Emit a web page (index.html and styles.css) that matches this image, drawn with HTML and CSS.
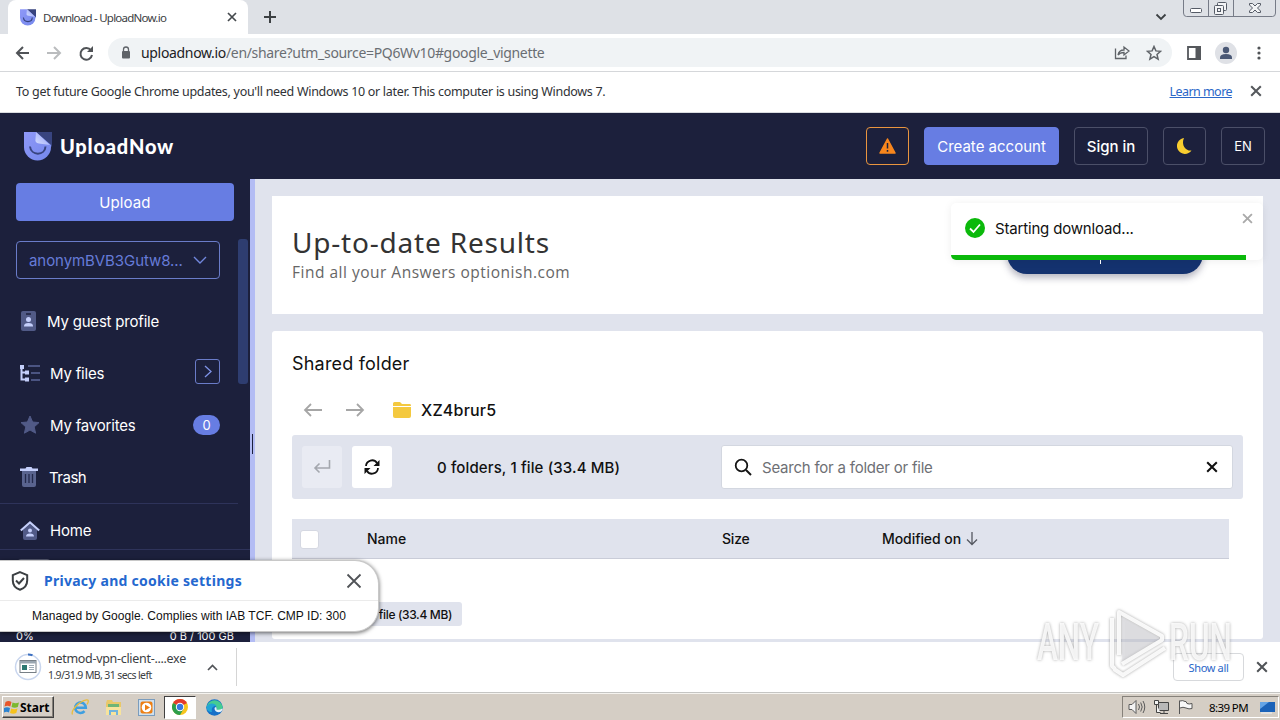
FILE: index.html
```html
<!DOCTYPE html>
<html lang="en">
<head>
<meta charset="utf-8">
<title>Download - UploadNow.io</title>
<link rel="stylesheet" href="styles.css">
</head>
<body>
<svg width="0" height="0" class="defs">
  <defs>
    <linearGradient id="lg" x1="0" y1="0" x2="1" y2="1"><stop offset="0" stop-color="#8f98f8"/><stop offset="1" stop-color="#7488ec"/></linearGradient>
    <linearGradient id="fold" x1="0" y1="1" x2="1" y2="0"><stop offset="0" stop-color="#d5ddff"/><stop offset="1" stop-color="#8f9df4"/></linearGradient>
    <symbol id="logo" viewBox="0 0 28 29">
      <path d="M12 0h16v15z" fill="#38447f"/>
      <path d="M0 0h12l15 13v2a13.500 13.500 0 0 1-27 0z" fill="url(#lg)"/>
      <path d="M12 0l14 13-11-1.500c-3-.5-4-2-3.500-4.500z" fill="url(#fold)"/>
      <path d="M6 14.500c1 9.500 15 9.500 15.500 0" fill="none" stroke="#38447f" stroke-width="2"/>
    </symbol>
    <symbol id="x" viewBox="0 0 10 10"><path d="M1 1l8 8M9 1L1 9" fill="none" stroke="currentColor" stroke-width="1.700"/></symbol>
  </defs>
</svg>
<div class="screen">
  <div class="tabstrip">
    <div class="tab">
      <svg class="fav" width="16" height="17"><use href="#logo"/></svg>
      <span class="tab-title">Download - UploadNow.io</span>
      <svg class="tab-x" width="10" height="10"><use href="#x"/></svg>
    </div>
    <svg class="plus" width="12" height="12" viewBox="0 0 12 12"><path d="M6 0v12M0 6h12" stroke="#3c4043" stroke-width="2"/></svg>
    <svg class="tabsearch" width="12" height="8" viewBox="0 0 12 8"><path d="M1.500 1.500L6 6l4.500-4.500" fill="none" stroke="#3c4043" stroke-width="1.800"/></svg>
    <svg class="winbtns" width="94" height="18" viewBox="0 0 94 18" fill="none" stroke="#767b87">
      <path d="M.5 0v13q0 3.500 3 3.500h86q3 0 3-3.500V0M25.500 0v16M50.500 0v16"/>
      <rect x="7.500" y="8.500" width="11" height="4" rx="1" fill="#fff" stroke="#555b66"/>
      <g stroke="#555b66" fill="#f3f4f6"><rect x="34.500" y="2.500" width="9" height="8" rx="1"/><rect x="31.500" y="5.500" width="9" height="9" rx="1"/><rect x="34.500" y="8.500" width="3" height="3"/>
      <path d="M66.500 3.500h3l2.500 2.500 2.500-2.500h3v1.500L74.500 8l3 3v1.500h-3L72 10l-2.500 2.500h-3V11l3-3-3-3z"/></g>
    </svg>
  </div>
  <div class="toolbar">
    <svg class="nav" width="80" height="18" viewBox="0 0 80 18" fill="none" stroke-width="2">
      <g stroke="#505357"><path d="M14 9H2M8 3L2 9l6 6"/></g>
      <g stroke="#babcbe"><path d="M32 9h13M39 3l6 6-6 6"/></g>
      <path d="M76 6.500A5.800 5.800 0 1 0 77 11" stroke="#505357"/><path d="M78 2v6h-6z" fill="#505357"/>
    </svg>
    <div class="omni">
      <svg width="10" height="13" viewBox="0 0 10 13"><rect x="1" y="5" width="8" height="7.500" rx="1" fill="#5f6368"/><path d="M2.500 5.500V3.500a2.500 2.500 0 0 1 5 0v2" fill="none" stroke="#5f6368" stroke-width="1.300"/></svg>
      <span class="url"><b>uploadnow.io</b>/en/share?utm_source=PQ6Wv10#google_vignette</span>
      <svg class="share" width="16" height="15" viewBox="0 0 16 15" fill="none" stroke="#5f6368" stroke-width="1.300"><path d="M1.500 3.500V13.500H12V10.500"/><path d="M4 10q1-5 6-5V2l5 4-5 4V7.500q-4 0-6 2.500z"/></svg>
      <svg class="star" width="16" height="16" viewBox="0 0 16 16"><path d="M8 1.500l1.900 4.400 4.700.4-3.600 3.200 1.100 4.700L8 11.700l-4.100 2.500L5 9.500 1.400 6.300l4.700-.4z" fill="none" stroke="#5f6368" stroke-width="1.500"/></svg>
    </div>
    <svg class="panel" width="14" height="14" viewBox="0 0 14 14"><path d="M1 1h12v12H1z" fill="none" stroke="#55585c" stroke-width="1.800"/><path d="M8.500 0H14v14H8.500z" fill="#55585c"/></svg>
    <svg class="avatar" width="22" height="22" viewBox="0 0 22 22"><circle cx="11" cy="11" r="11" fill="#dfe1e6"/><circle cx="11" cy="8" r="3.200" fill="#4a5875"/><path d="M5 17v-1.500q0-3.500 6-3.500t6 3.500V17z" fill="#4a5875"/></svg>
    <svg class="dots" width="4" height="14" viewBox="0 0 4 14" fill="#505357"><circle cx="2" cy="2" r="1.600"/><circle cx="2" cy="7" r="1.600"/><circle cx="2" cy="12" r="1.600"/></svg>
  </div>
  <div class="infobar">
    <span class="info-text">To get future Google Chrome updates, you'll need Windows 10 or later. This computer is using Windows 7.</span>
    <span class="learn">Learn more</span>
    <svg width="12" height="12"><use href="#x"/></svg>
  </div>
  <header class="site">
    <svg width="28" height="29"><use href="#logo"/></svg>
    <span class="brand">UploadNow</span>
    <div class="hbtns">
      <div class="hb warn"><svg width="17" height="16" viewBox="0 0 17 16"><path d="M8.500 1L16 15H1z" fill="#f8861d" stroke="#f8861d" stroke-linejoin="round" stroke-width="1.500"/><path d="M8.500 5v5.500M8.500 12v1.700" stroke="#1c203c" stroke-width="1.500"/></svg></div>
      <div class="hb create"><span>Create account</span></div>
      <div class="hb sign"><span>Sign in</span></div>
      <div class="hb moon"><svg width="15" height="16" viewBox="0 0 15 16"><path d="M7 0a8 8 0 1 0 7.500 12.500C8 13.500 4 6 7 0z" fill="#f8cd2f"/></svg></div>
      <div class="hb lang"><span>EN</span></div>
    </div>
  </header>
  <div class="page">
    <aside>
      <div class="upload"><span>Upload</span></div>
      <div class="side-scroll">
        <div class="side-main">
          <div class="select"><span>anonymBVB3Gutw8...</span><svg width="14" height="9" viewBox="0 0 14 9"><path d="M1 1l6 6 6-6" fill="none" stroke="#7187dd" stroke-width="1.400"/></svg></div>
          <div class="item guest"><svg width="15" height="20" viewBox="0 0 15 20"><rect width="15" height="20" rx="2" fill="#515a87"/><circle cx="7.500" cy="8.500" r="2.500" fill="#c5cffb"/><path d="M3 15q0-3 4.500-3t4.500 3v.5H3z" fill="#c5cffb"/><path d="M5 3h5" stroke="#1c203c" stroke-width="1.500"/></svg><span>My guest profile</span></div>
          <div class="item"><svg width="20" height="18" viewBox="0 0 20 18"><path d="M1.500 2v13.500H7M1.500 8.500H7" fill="none" stroke="#c5cffb" stroke-width="2"/><path d="M0 1h4v4H0zM5 6.500h4v4H5zM5 13.500h4v4H5z" fill="#c5cffb"/><path d="M8 2h12M11 9h9M11 16h9" stroke="#4b5482" stroke-width="2"/></svg><span class="t2">My files</span><div class="more"><svg width="8" height="13" viewBox="0 0 8 13"><path d="M1 1l6 5.500L1 12" fill="none" stroke="#7f93e8" stroke-width="1.300"/></svg></div></div>
          <div class="item"><svg width="20" height="20" viewBox="0 0 20 20"><path d="M10 1l2.600 6 6.400.6-4.800 4.300 1.400 6.300L10 15l-5.600 3.200 1.400-6.300L1 7.600 7.400 7z" fill="#515a87" stroke="#515a87" stroke-linejoin="round"/></svg><span class="t3">My favorites</span><div class="badge"><span>0</span></div></div>
          <div class="item"><svg width="18" height="20" viewBox="0 0 18 20"><path d="M2 4h14v14q0 2-2 2H4q-2 0-2-2z" fill="#5a648f"/><path d="M0 1.500h5.500L6.500 0h5l1 1.500H18V4H0z" fill="#c5cffb"/><path d="M5.500 7v9M9 7v9M12.500 7v9" stroke="#242a4c" stroke-width="1.300"/></svg><span class="t4">Trash</span></div>
          <div class="item home"><svg width="20" height="19" viewBox="0 0 20 19"><path d="M3 9l7-6 7 6v8q0 2-2 2H5q-2 0-2-2z" fill="#515a87"/><path d="M.8 9.500L10 1.500l9.200 8" fill="none" stroke="#c5cffb" stroke-width="2.200"/><circle cx="10" cy="9.500" r="2" fill="#c5cffb"/><path d="M6 15.500q0-3 4-3t4 3z" fill="#c5cffb"/></svg><span class="t5">Home</span></div>
        </div>
        <div class="thumb"></div>
      </div>
      <div class="side-foot"><div class="ghost"></div><div class="quota"><span>0%</span><span class="q2">0 B / 100 GB</span></div></div>
    </aside>
    <div class="splitter"><i></i></div>
    <main>
      <section class="card ad">
        <div class="ad-text"><div class="ad-h"><span>Up-to-date Results</span></div><div class="ad-p"><span>Find all your Answers optionish.com</span></div></div>
        <div class="ad-btn"><i></i></div>
      </section>
      <section class="card files">
        <h2><span>Shared folder</span></h2>
        <div class="crumbs">
          <svg width="20" height="14" viewBox="0 0 20 14" fill="none" stroke="#a6a6a6" stroke-width="1.800"><path d="M19 7H2M8 1L2 7l6 6"/></svg>
          <svg class="fwd" width="20" height="14" viewBox="0 0 20 14" fill="none" stroke="#a6a6a6" stroke-width="1.800"><path d="M1 7h17M12 1l6 6-6 6"/></svg>
          <svg class="folder" width="18" height="16" viewBox="0 0 18 16" fill="#f4c93f"><path d="M0 4V1.500Q0 0 1.500 0H7l2 2h8q1 0 1 2z"/><path d="M0 5h18v9q0 2-2 2H2q-2 0-2-2z"/></svg>
          <span>XZ4brur5</span>
        </div>
        <div class="tools">
          <div class="sq off"><svg width="18" height="14" viewBox="0 0 18 14"><path d="M16.500 0v8H2M6.500 3.500L2 8l4.500 4.500" fill="none" stroke="#a4a7ae" stroke-width="1.600"/></svg></div>
          <div class="sq"><svg width="16" height="16" viewBox="0 0 16 16"><path d="M2 7A6 6 0 0 1 13 4M14 9A6 6 0 0 1 3 12" fill="none" stroke="#111" stroke-width="1.800"/><path d="M15.500 1v6h-6zM.5 15V9h6z" fill="#111"/></svg></div>
          <span class="count">0 folders, 1 file (33.4 MB)</span>
          <div class="search">
            <svg width="18" height="18" viewBox="0 0 18 18"><circle cx="7.500" cy="7.500" r="5.800" fill="none" stroke="#151515" stroke-width="1.800"/><path d="M12 12l5 5" stroke="#151515" stroke-width="2"/></svg>
            <span>Search for a folder or file</span>
            <svg class="clear" width="12" height="12"><use href="#x"/></svg>
          </div>
        </div>
        <div class="thead"><div class="check"></div><span class="c1">Name</span><span class="c2">Size</span><span class="c3">Modified on</span><svg width="12" height="14" viewBox="0 0 12 14"><path d="M6 0v12M1 7.500L6 12.500l5-5" fill="none" stroke="#555860" stroke-width="1.300"/></svg></div>
        <div class="tag"><span>file (33.4 MB)</span></div>
      </section>
    </main>
    <div class="toast">
      <svg width="20" height="20" viewBox="0 0 20 20"><circle cx="10" cy="10" r="10" fill="#0bb90b"/><path d="M5 10.500l3.500 3.500L15 6.500" fill="none" stroke="#fff" stroke-width="1.800"/></svg>
      <span>Starting download...</span>
      <svg class="toast-x" width="11" height="11"><use href="#x"/></svg>
      <div class="progress"></div>
    </div>
    <div class="cookie">
      <div class="ck-top">
        <svg width="18" height="20" viewBox="0 0 18 20" fill="none" stroke="#3c4043" stroke-width="2"><path d="M9 1.200l7.200 3v5.300c0 4.500-3 7.800-7.200 9.200-4.200-1.400-7.200-4.700-7.200-9.200V4.200z"/><path d="M5 9.500l3 3 5-5.500"/></svg>
        <span>Privacy and cookie settings</span>
        <svg class="ck-x" width="16" height="16" viewBox="0 0 16 16"><path d="M1.500 1.500l13 13M14.500 1.500l-13 13" stroke="#505357" stroke-width="1.800"/></svg>
      </div>
      <div class="ck-bot"><span>Managed by Google. Complies with IAB TCF. CMP ID: 300</span></div>
    </div>
  </div>
  <div class="downloads">
    <svg width="28" height="28" viewBox="0 0 28 28"><circle cx="14" cy="14" r="12.500" fill="none" stroke="#c9d6ee" stroke-width="1.500"/><path d="M14 1.500a12.500 12.500 0 0 1 4.500.8" fill="none" stroke="#3b6fc0" stroke-width="2"/><rect x="6" y="7.500" width="16" height="12" fill="#fff" stroke="#777f86"/><path d="M6 8h16v2.500H6z" fill="#9aa6b0"/><path d="M8 12h5v5H8z" fill="#2c7770"/><path d="M15 12.500h5M15 14.500h5M15 16.500h5" stroke="#9dabb5"/></svg>
    <div class="dl-text"><span class="dl-name">netmod-vpn-client-....exe</span><span class="dl-sub">1.9/31.9 MB, 31 secs left</span></div>
    <svg class="dl-up" width="11" height="7" viewBox="0 0 11 7"><path d="M1 6l4.500-4.500L10 6" fill="none" stroke="#505357" stroke-width="1.700"/></svg>
    <div class="dl-sep"></div>
    <div class="showall"><span>Show all</span></div>
    <svg width="12" height="12"><use href="#x"/></svg>
  </div>
  <div class="taskbar">
    <div class="start"><svg width="16" height="15" viewBox="0 0 16 15"><path d="M1.500 2q3-2 6 0L6.300 6.500Q3.500 5 .5 6.500z" fill="#e8562a"/><path d="M8.500 2.500q3 1.500 6.500 0L13.800 7q-3 1.500-6.300 0z" fill="#7cb82f"/><path d="M0 8q3-1.500 6 0l-1 4.500q-2.500-1.500-5 0z" fill="#2b83d0"/><path d="M7.200 8.500q3 1.500 6.300 0L12.300 13q-3 1.500-6.300 0z" fill="#f6c21c"/></svg><span>Start</span></div>
    <svg class="ie" width="18" height="18" viewBox="0 0 18 18"><path d="M4.500 9.700h10.300A5.300 5.300 0 1 0 13.500 13.200" fill="none" stroke="#3f9fe0" stroke-width="2.600"/><path d="M1.500 16.500C-.5 13 8 3 15.500 1.800c2.500-.3 2 2.500.5 4.500" fill="none" stroke="#e9bd3c" stroke-width="1.300"/></svg>
    <svg class="exp" width="17" height="17" viewBox="0 0 17 17"><path d="M1 4l1-3h5l1 2h8v12H1z" fill="#e9c869"/><path d="M3 5h11v5H3z" fill="#6fb577"/><path d="M1 8h15v8H1z" fill="#f7e39c"/><path d="M4 16v-5h9v5h-2v-3H6v3z" fill="#72b4dc"/></svg>
    <svg class="wmp" width="17" height="17" viewBox="0 0 17 17"><rect x=".5" y=".5" width="16" height="16" fill="#cfe0ee" stroke="#7a9cbd"/><rect x="2.500" y="2.500" width="12" height="12" rx="2" fill="#ed7f14"/><circle cx="8.500" cy="8.500" r="4.800" fill="#fff"/><path d="M7 5.500l5 3-5 3z" fill="#ed7f14"/></svg>
    <div class="chrome-task"><svg width="16" height="16" viewBox="0 0 16 16"><circle cx="8" cy="8" r="8" fill="#f7c51e"/><path d="M8 8L1.070 4A8 8 0 0 1 14.930 4z" fill="#e33b2e"/><path d="M8 8L1.070 4A8 8 0 0 0 8 16l3.500-6z" fill="#2c9e4b"/><circle cx="8" cy="8" r="4.200" fill="#fff"/><circle cx="8" cy="8" r="3.200" fill="#3978e0"/></svg></div>
    <svg class="edge" width="17" height="17" viewBox="0 0 17 17"><circle cx="8.500" cy="8.500" r="8.300" fill="#1670c8"/><path d="M.5 8A8.300 8.300 0 0 1 16.800 8c0 4-5 4-6.500 2.500C12 7 7 4.500.5 8z" fill="#45cc92"/><path d="M.5 8C3 3 9 4 10.500 7 7 6.500 5 9 6 13 2.500 13 .5 11 .5 8z" fill="#21a5d6"/><path d="M8.500 9.500c0 3 3.500 4.500 6.500 3.200l1.500-1.700v-1.500q-3.500 2-6 1Q11 8.500 10 8 8.500 8 8.500 9.500z" fill="#e6f2fa"/></svg>
    <div class="tray">
      <svg width="18" height="16" viewBox="0 0 18 16" fill="#f3f3f3" stroke="#5b5b5b"><path d="M1 5.500h3l4-4v13l-4-4H1z"/><path d="M10.500 5q2 3 0 6M12.700 3.500q3 4.500 0 9M15 2q3.500 6 0 12" fill="none"/></svg>
      <svg width="17" height="16" viewBox="0 0 17 16" fill="#f3f3f3" stroke="#444"><path d="M5.500 3.500h10v8h-10z" fill="#b8b8b8"/><path d="M7 14.500h8M11 11.500v3M1.500 1.500h4v4h-4zM3.500 5.500v8h4"/></svg>
      <svg width="16" height="16" viewBox="0 0 16 16" fill="#f8f8f8" stroke="#555"><path d="M2.500 15V1.500M3 2q3-1 5 .5h1l1 2q2 1 5 0v5q-3 1-6-.5Q6 7.500 3 9"/></svg>
      <span>8:39 PM</span>
      <svg width="16" height="13" viewBox="0 0 16 13"><path d="M0 1h15v10H0z" fill="#1b62b8"/><path d="M0 1h9L0 8z" fill="#64a4e6"/><path d="M1 12h11" stroke="#edf2f8"/></svg>
    </div>
  </div>
  <svg class="watermark" width="202" height="72" viewBox="0 0 202 72">
    <g font-family="Roboto, sans-serif" font-size="51" font-weight="500" fill="#fff" fill-opacity=".85">
      <text x="5" y="53" textLength="62" lengthAdjust="spacingAndGlyphs">ANY</text>
      <text x="137" y="53" textLength="63" lengthAdjust="spacingAndGlyphs">RUN</text>
    </g>
    <path d="M90 10l38 21-38 24z" fill="#cfd1d9" fill-opacity=".3"/>
    <g fill="none" stroke="#fff" stroke-opacity=".9" stroke-width="4" stroke-linejoin="round"><path d="M80 11v48l3 3M87 48V5l43 24v4L90 57M82 62l9 6 42-27"/></g>
  </svg>
</div>
</body>
</html>
```
FILE: styles.css
```css
* { box-sizing: border-box; }
body { margin: 0; font-family: "Noto Sans", "Open Sans", sans-serif; color: #111; }
.defs { position: absolute; }
svg { flex: none; display: block; }
span { white-space: nowrap; flex: none; }
.screen { position: relative; width: 1280px; height: 720px; overflow: hidden; display: flex; flex-direction: column; background: #fff; }
.screen > div, .screen > header { flex: none; }

.tabstrip { height: 34px; background: #dee1e6; display: flex; align-items: center; padding-left: 8px; }
.tab { width: 240px; height: 34px; background: #fff; border-radius: 8px 8px 0 0; display: flex; align-items: center; padding: 0 11px 0 12px; }
.tab-title { margin-left: 7px; font-size: 11.500px; letter-spacing: -.75px; color: #3c4043; }
.tab-x { margin-left: auto; color: #45494d; }
.plus { margin-left: 16px; }
.tabsearch { margin-left: auto; }
.winbtns { margin: 0 3px 0 16px; align-self: flex-start; }

.toolbar { height: 38px; border-bottom: 1px solid #d5d7da; display: flex; align-items: center; padding-left: 15px; }
.omni { margin-left: 13px; width: 1064px; height: 29px; border-radius: 15px; background: #f0f3f5; display: flex; align-items: center; padding: 0 10px 0 13px; }
.url { margin-left: 10px; font-size: 14px; letter-spacing: -.33px; color: #6a6e73; }
.url b { font-weight: 400; color: #202124; }
.share { margin-left: auto; }
.star { margin-left: 16px; }
.panel { margin-left: 15px; }
.avatar { margin-left: 14px; }
.dots { margin-left: 20px; }

.infobar { height: 41px; border-bottom: 1px solid #dadce0; display: flex; align-items: center; padding: 0 18px 2px 16px; color: #55585c; }
.info-text { font-size: 12.500px; letter-spacing: -.3px; color: #303236; }
.learn { margin: 0 18px 0 auto; font-size: 12.500px; letter-spacing: -.55px; color: #2a66c8; text-decoration: underline; }

.site { height: 66px; background: #1c203c; display: flex; align-items: center; padding: 0 15px 0 24px; color: #fff; font-family: Inter, sans-serif; }
.brand { margin-left: 8px; font: 900 20px Lato, sans-serif; letter-spacing: .8px; }
.hbtns { margin-left: auto; display: flex; gap: 15px; }
.hb { width: 44px; height: 38px; border: 1px solid #4b4f68; border-radius: 4px; display: flex; align-items: center; justify-content: center; font-size: 16px; font-weight: 500; }
.warn { width: 43px; border-color: #e9953f; }
.create { width: 135px; background: #677de3; border-color: #677de3; font-weight: 400; font-size: 15px; }
.sign { width: 74px; font-size: 15px; }
.moon { width: 43px; }
.lang { font-size: 13px; font-weight: 400; }

.page { position: relative; height: 463px; display: flex; background: #e0e3ed; overflow: hidden; font-family: Inter, sans-serif; }
aside { width: 250px; background: #1c203c; padding-top: 4px; color: #fff; display: flex; flex-direction: column; }
.upload { margin-left: 16px; width: 218px; height: 38px; border-radius: 4px; background: #677de3; display: flex; align-items: center; justify-content: center; font-size: 15px; letter-spacing: .1px; }
.side-scroll { margin-top: 18px; height: 311px; display: flex; border-bottom: 1px solid #2e335a; overflow: hidden; }
.side-main { width: 238px; padding-top: 2px; }
.select { margin: 0 0 16px 16px; width: 204px; height: 38px; border: 1px solid #6a7cc9; border-radius: 4px; display: flex; align-items: center; justify-content: space-between; padding: 0 12px; color: #667bd8; font-size: 15px; letter-spacing: -.07px; }
.item { height: 52px; display: flex; align-items: center; padding: 0 18px 0 20px; font-size: 15px; letter-spacing: -.2px; }
.item span { margin-left: 10px; }
.item .badge span { margin: 0; }
.item.guest { padding-left: 21px; }
.item.guest span { margin-left: 11px; }
.item .t4 { margin-left: 11px; letter-spacing: -.5px; }
.home { border-top: 1px solid #2e335a; height: 54px; }
.more { margin: -4px 0 0 auto; width: 25px; height: 25px; border: 1px solid #6a7cc9; border-radius: 3px; display: flex; align-items: center; justify-content: center; }
.badge { margin-left: auto; width: 27px; height: 20px; border-radius: 10px; background: #677de3; display: flex; align-items: center; justify-content: center; font-size: 13px; }
.thumb { width: 10px; height: 145px; background: #2e3d70; border-radius: 3px; }
.side-foot { flex: 1; display: flex; flex-direction: column; justify-content: space-between; padding: 9px 16px 0; }
.ghost { width: 36px; height: 20px; border: 1px solid #5a5e75; border-radius: 5px; }
.quota { display: flex; justify-content: space-between; font-size: 11px; line-height: 11px; }
.splitter { width: 5px; background: #b3bcf4; display: flex; align-items: center; }
.splitter i { width: 1px; height: 20px; margin: 67px 0 0 2px; background: #1c203c; }
main { flex: 1; padding: 17px; display: flex; flex-direction: column; gap: 17px; }
.card { background: #fff; border-radius: 3px; flex: none; }
.ad { height: 118px; padding: 0 60px 0 20px; display: flex; justify-content: space-between; align-items: center; border-radius: 0; }
.ad-h { font: 28px/34px "Noto Sans", sans-serif; letter-spacing: .8px; color: #333; }
.ad-p { font: 15.500px/26px "Open Sans", sans-serif; letter-spacing: .5px; color: #666; }
.ad-btn { width: 196px; height: 40px; border-radius: 20px; background: #14326f; box-shadow: 0 4px 7px rgba(50,50,80,.35); display: flex; justify-content: center; align-items: flex-end; margin-bottom: 3px; }
.ad-btn i { width: 1px; height: 4px; background: #fff; margin: 0 9px 10px 0; }
.files { height: 308px; padding: 20px; overflow: hidden; }
h2 { margin: 0; font-size: 18px; line-height: 26px; font-weight: 400; letter-spacing: .2px; }
.crumbs { margin-top: 20px; padding-left: 11px; height: 26px; display: flex; align-items: center; font-size: 16px; font-weight: 500; letter-spacing: .2px; }
.fwd { margin-left: 22px; }
.folder { margin: 0 10px 0 28px; }
.tools { margin-top: 12px; height: 64px; border-radius: 3px; background: #e0e3ed; display: flex; align-items: center; padding: 0 10px; gap: 10px; }
.sq { width: 40px; height: 42px; border-radius: 3px; background: #fff; display: flex; align-items: center; justify-content: center; }
.sq.off { background: #e9ebf3; }
.count { margin-left: 35px; font-size: 15px; font-weight: 500; letter-spacing: .12px; }
.search { margin-left: auto; width: 512px; height: 44px; background: #fff; border: 1px solid #d3d7e0; border-radius: 3px; display: flex; align-items: center; padding: 0 14px 0 12px; font-size: 15px; color: #6e7075; }
.search span { margin-left: 10px; letter-spacing: -.22px; }
.clear { margin-left: auto; color: #111; }
.thead { margin-top: 20px; width: 937px; height: 40px; background: #e0e3ed; border-bottom: 1px solid #c9ccd8; display: flex; align-items: center; padding-left: 8px; font-size: 14px; font-weight: 500; }
.check { width: 19px; height: 19px; border-radius: 3px; background: #fff; border: 1px solid #d5d8e2; margin-top: 1px; }
.c1 { margin-left: 48px; width: 355px; }
.c2 { width: 160px; letter-spacing: -.2px; }
.c3 { margin-right: 5px; letter-spacing: -.07px; }
.tag { margin-top: 43px; width: 170px; height: 24px; border-radius: 3px; background: #e0e3ed; display: flex; align-items: center; justify-content: flex-end; padding-right: 10px; font-size: 12px; font-weight: 500; letter-spacing: -.35px; }

.toast { position: absolute; left: 951px; top: 24px; width: 312px; height: 57px; background: #fff; border-radius: 5px; box-shadow: 0 1px 8px rgba(0,0,0,.07); display: flex; align-items: center; padding: 0 10px 7px 14px; overflow: hidden; font-size: 15px; letter-spacing: -.17px; }
.toast > span { margin-left: 10px; }
.toast-x { margin: -20px 0 0 auto; color: #aaa; }
.progress { position: absolute; left: 0; bottom: 0; width: 295px; height: 5px; background: #0bb90b; }
.cookie { position: absolute; left: 0; top: 381px; width: 379px; height: 72px; background: #fff; border: 1px solid #c8c8c8; border-left: 0; border-radius: 0 24px 24px 0; box-shadow: 0 1px 4px rgba(0,0,0,.6); overflow: hidden; }
.ck-top { height: 40px; border-bottom: 1px solid #ebebeb; display: flex; align-items: center; padding: 0 16px 0 11px; }
.ck-top span { margin-left: 15px; font: 700 14px "Noto Sans", sans-serif; color: #2468cf; letter-spacing: .27px; }
.ck-x { margin-left: auto; }
.ck-bot { padding-left: 32px; font: 12px/30px "Liberation Sans", sans-serif; letter-spacing: .03px; }

.downloads { height: 51px; border-bottom: 1px solid #c5c5c3; display: flex; align-items: center; padding: 0 12px 0 14px; color: #505357; }
.dl-text { margin-left: 6px; width: 140px; display: flex; flex-direction: column; color: #3c4043; padding-bottom: 1px; }
.dl-name { font-size: 12.500px; line-height: 17px; letter-spacing: -.3px; }
.dl-sub { font-size: 10.500px; line-height: 16px; letter-spacing: -.6px; }
.dl-up { margin-left: 19px; }
.dl-sep { margin-left: 18px; width: 1px; height: 38px; background: #d5d5d5; }
.showall { margin: 0 12px 0 auto; width: 71px; height: 28px; border: 1px solid #d7d9dc; border-radius: 4px; display: flex; align-items: center; justify-content: center; font-size: 11px; letter-spacing: -.35px; color: #2a66c8; }
.taskbar { height: 27px; border-top: 1px solid #f5f3ef; background: #d5cec5; display: flex; align-items: center; padding: 0 1px 0 2px; }
.start { width: 52px; height: 22px; border: 1px solid; border-color: #fff #404040 #404040 #fff; box-shadow: inset -1px -1px #86817a; display: flex; align-items: center; padding-left: 1px; }
.start span { font-size: 12px; font-weight: 700; color: #000; }
.ie { margin-left: 17px; }
.exp { margin-left: 16px; }
.wmp { margin-left: 16px; }
.chrome-task { margin-left: 9px; width: 32px; height: 23px; background: #fff; border: 1px solid; border-color: #404040 #fff #fff #404040; display: flex; align-items: center; justify-content: center; }
.edge { margin-left: 10px; }
.tray { margin-left: auto; width: 157px; height: 22px; border: 1px solid; border-color: #86817a #fff #fff #86817a; display: flex; align-items: center; padding-left: 5px; gap: 7px; color: #000; }
.tray span { margin: 0 5px 0 9px; font-size: 11.500px; letter-spacing: -.6px; }
.watermark { position: absolute; left: 1032px; top: 607px; filter: drop-shadow(0 0 1.500px rgba(90,90,90,.6)); }
```
